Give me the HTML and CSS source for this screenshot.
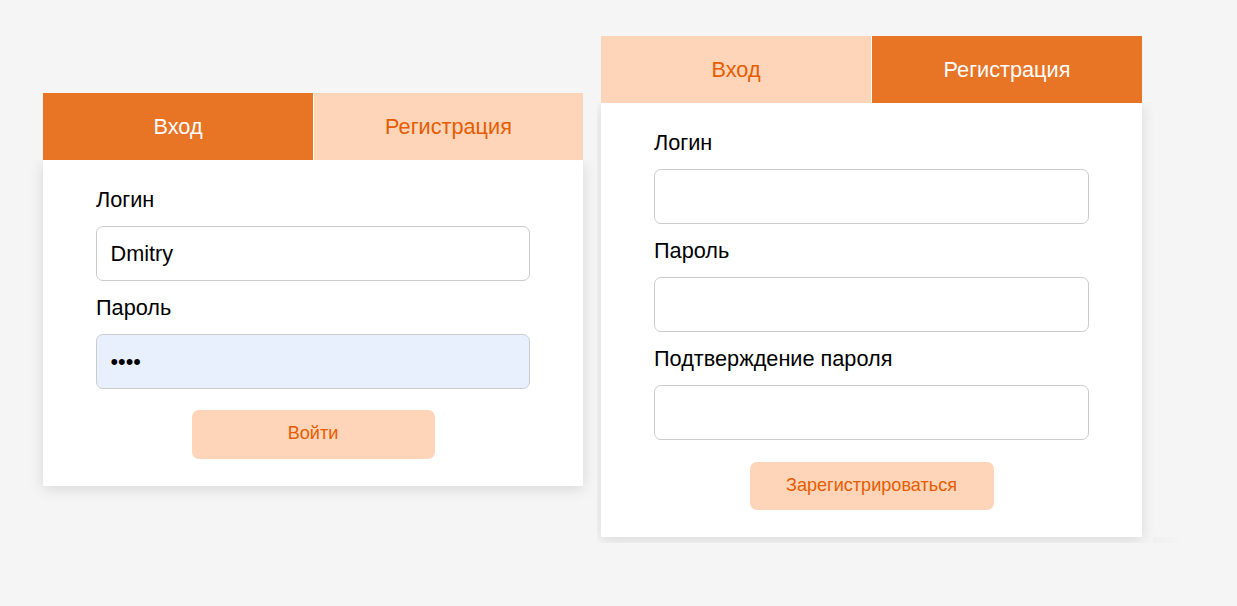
FILE: index.html
```
<!DOCTYPE html>
<html lang="ru">
<head>
<meta charset="utf-8">
<title>Вход и регистрация</title>
<link rel="stylesheet" href="styles.css">
</head>
<body>
<main class="page">
  <section class="card card-login">
    <nav class="tabs">
      <a class="tab tab-active">Вход</a>
      <a class="tab">Регистрация</a>
    </nav>
    <form class="form">
      <label class="label" for="login">Логин</label>
      <input class="input" id="login" type="text" value="Dmitry">
      <label class="label" for="password">Пароль</label>
      <input class="input input-filled" id="password" type="password" value="1234">
      <button class="button" type="button">Войти</button>
    </form>
  </section>
  <section class="card card-register">
    <nav class="tabs">
      <a class="tab">Вход</a>
      <a class="tab tab-active">Регистрация</a>
    </nav>
    <form class="form">
      <label class="label" for="new-login">Логин</label>
      <input class="input" id="new-login" type="text">
      <label class="label" for="new-password">Пароль</label>
      <input class="input" id="new-password" type="password">
      <label class="label" for="confirm">Подтверждение пароля</label>
      <input class="input" id="confirm" type="password">
      <button class="button" type="button">Зарегистрироваться</button>
    </form>
  </section>
  <div class="shade"></div>
</main>
</body>
</html>
```
FILE: styles.css
```
* {
  box-sizing: border-box;
}

body {
  margin: 0;
  background: #f5f5f5;
  color: #000;
  font-family: "Liberation Sans", Arial, sans-serif;
  font-size: 21.7px;
}

.page {
  display: flex;
  align-items: flex-start;
  gap: 18px;
  height: 606px;
  padding: 36px 0 0 43px;
  overflow: hidden;
}

.card {
  flex: none;
}

.card-login {
  width: 540px;
  margin-top: 57px;
}

.card-register {
  width: 541px;
  clip-path: inset(0 -11px -6px -4px);
}

.tabs {
  display: flex;
  gap: 1px;
  height: 67px;
  background: linear-gradient(#fff, #fff) center / 4px 100% no-repeat;
}

.tab {
  display: flex;
  flex: 1;
  align-items: center;
  justify-content: center;
  background: #ffd5b9;
  color: #e65c00;
}

.card-login .tab-active {
  flex: 0 0 270px;
}

.tab-active {
  background: #e87426;
  color: #fff;
}

.form {
  display: flex;
  flex-direction: column;
  padding: 27px 53px;
  background: #fff;
  box-shadow: 0 3px 14px rgba(0, 0, 0, 0.12);
  clip-path: inset(0 -20px -20px -20px);
}

.label {
  height: 25px;
  margin-bottom: 14px;
  line-height: 25px;
}

.input {
  width: 100%;
  height: 55px;
  margin: 0 0 14px;
  padding: 0 13.5px;
  border: 1px solid #ccc;
  border-radius: 7px;
  outline: 0;
  background: #fff;
  color: #000;
  font: inherit;
}

.input-filled {
  background: #e8f0fe;
}

.button {
  align-self: center;
  width: 243px;
  height: 49px;
  margin-top: 7px;
  padding: 0 0 3px;
  border: 0;
  border-radius: 7px;
  background: #ffd5b9;
  color: #e65c00;
  font: 18.1px "Liberation Sans", Arial, sans-serif;
}

.card-register .button {
  width: 244px;
  height: 48px;
  margin-top: 8px;
  padding-bottom: 2px;
}

/* Faint strip of shadow beside the registration card */
.shade {
  flex: none;
  width: 30px;
  height: 6px;
  margin: 501px 0 0 -7px;
  background: linear-gradient(to right, #f0f0f0, #f5f5f5);
}
```
